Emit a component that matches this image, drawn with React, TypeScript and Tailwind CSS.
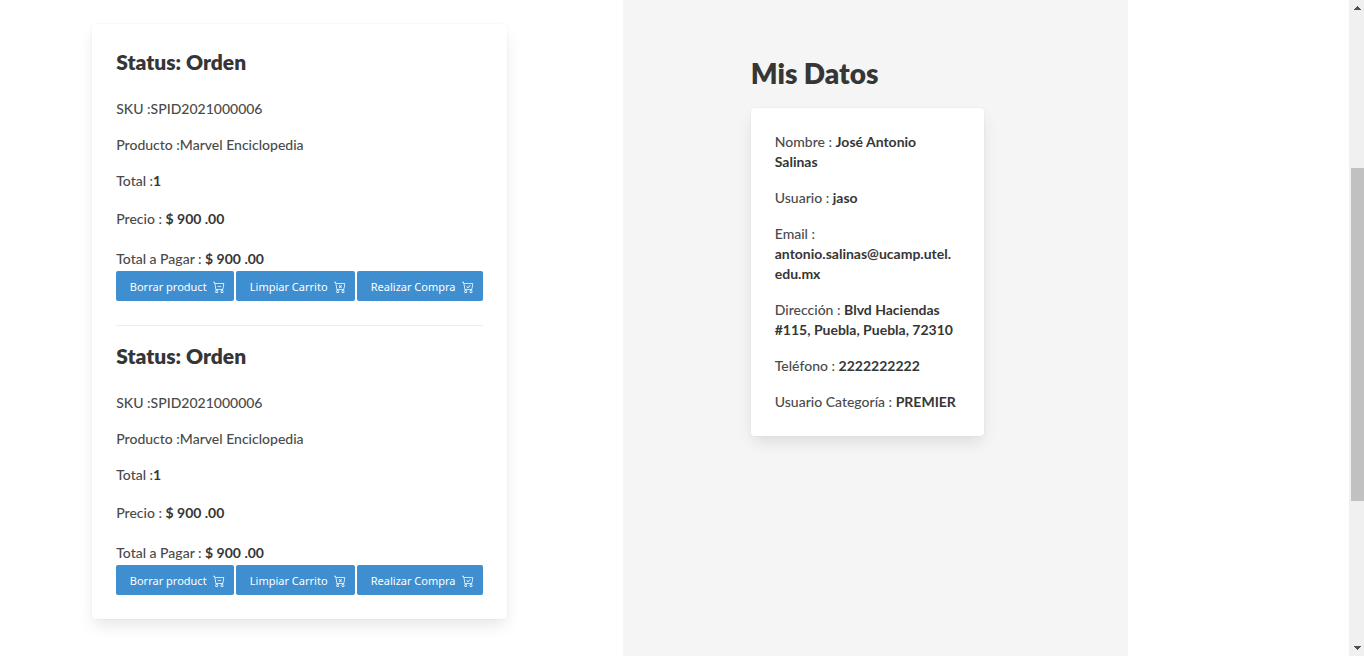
import { Fragment } from "react";
import { BsCartCheck, BsCartDash, BsCartX } from "react-icons/bs";
import type { IconType } from "react-icons";

const order = {
  status: "Orden",
  sku: "SPID2021000006",
  product: "Marvel Enciclopedia",
  total: "1",
  price: "$ 900 .00",
};

const orders = [
  { id: 1, ...order },
  { id: 2, ...order },
];

// Each value is a list of parts between which a line may break.
const customer = [
  { label: "Nombre", value: ["José Antonio Salinas"] },
  { label: "Usuario", value: ["jaso"] },
  { label: "Email", value: ["antonio.salinas@ucamp.utel.", "edu.mx"] },
  { label: "Dirección", value: ["Blvd Haciendas #115, Puebla, Puebla, 72310"] },
  { label: "Teléfono", value: ["2222222222"] },
  { label: "Usuario Categoría", value: ["PREMIER"] },
];

function ActionButton({ label, icon: Icon }: { label: string; icon: IconType }) {
  return (
    <button
      type="button"
      className="flex h-[30px] grow items-center justify-center gap-1.5 whitespace-nowrap rounded-xs bg-[#3e8ed0] pt-0.5 pr-1.5 pl-2.5 font-['Noto_Sans',sans-serif] text-[11px] font-normal text-white"
    >
      {label}
      <Icon className="size-3 shrink-0" aria-hidden="true" />
    </button>
  );
}

function Order({ data }: { data: typeof order }) {
  return (
    <article>
      <h2 className="mb-6 text-[21px] leading-[27px] font-extrabold text-[#363636]">Status: {data.status}</h2>
      <p className="mb-4">SKU :{data.sku}</p>
      <p className="mb-4">Producto :{data.product}</p>
      <p className="mb-[18px]">
        Total :<strong className="text-[#363636]">{data.total}</strong>
      </p>
      <p className="mb-5">
        Precio : <strong className="text-[#363636]">{data.price}</strong>
      </p>
      <p className="mb-0.5">
        Total a Pagar : <strong className="text-[#363636]">{data.price}</strong>
      </p>
      <div className="flex gap-0.5">
        <ActionButton label="Borrar product" icon={BsCartDash} />
        <ActionButton label="Limpiar Carrito" icon={BsCartX} />
        <ActionButton label="Realizar Compra" icon={BsCartCheck} />
      </div>
    </article>
  );
}

function ScrollBar() {
  return (
    <div className="sticky top-0 flex h-screen w-[15px] shrink-0 flex-col bg-[#f0f0f0] pl-0.5" aria-hidden="true">
      <div className="flex h-4 items-center justify-center">
        <svg viewBox="0 0 7 4" className="h-1 w-[7px] fill-[#505050]">
          <path d="M3 0h1v1h1v1h1v1h1v1H0V3h1V2h1V1h1z" />
        </svg>
      </div>
      <div className="grow-[152]" />
      <div className="grow-[333] bg-[#c1c1c1]" />
      <div className="grow-[139]" />
      <div className="flex h-4 items-center justify-center">
        <svg viewBox="0 0 7 4" className="h-1 w-[7px] fill-[#505050]">
          <path d="M3 4h1V3h1V2h1V1h1V0H0v1h1v1h1v1h1z" />
        </svg>
      </div>
    </div>
  );
}

const cardClass =
  "rounded bg-white p-6 shadow-[0_8px_16px_-2px_rgba(10,10,10,0.1),0_0_0_1px_rgba(10,10,10,0.02)]";

export default function App() {
  return (
    <div className="flex min-h-screen bg-white font-['Lato',sans-serif] text-sm leading-5 font-medium text-[#4a4a4a]">
      <main className="grid min-w-0 grow grid-cols-[623fr_505fr_221fr]">
        <section className="pt-6 pr-[18.6%] pb-6 pl-[14.8%]">
          <div className={cardClass}>
            {orders.map((item, index) => (
              <div key={item.id}>
                {index > 0 && <hr className="mt-6 mb-4 border-[#ededed]" />}
                <Order data={item} />
              </div>
            ))}
          </div>
        </section>
        <aside className="bg-[#f5f5f5] pt-[55px] pr-[28.5%] pl-[25.3%]">
          <h1 className="mb-[17px] text-[28px] leading-9 font-extrabold whitespace-nowrap text-[#363636]">Mis Datos</h1>
          <div className={`${cardClass} space-y-4`}>
            {customer.map(({ label, value }) => (
              <p key={label} className="wrap-break-word">
                {label} :{" "}
                <strong className="text-[#363636]">
                  {value.map((part) => (
                    <Fragment key={part}>
                      {part}
                      <wbr />
                    </Fragment>
                  ))}
                </strong>
              </p>
            ))}
          </div>
        </aside>
      </main>
      <ScrollBar />
    </div>
  );
}
